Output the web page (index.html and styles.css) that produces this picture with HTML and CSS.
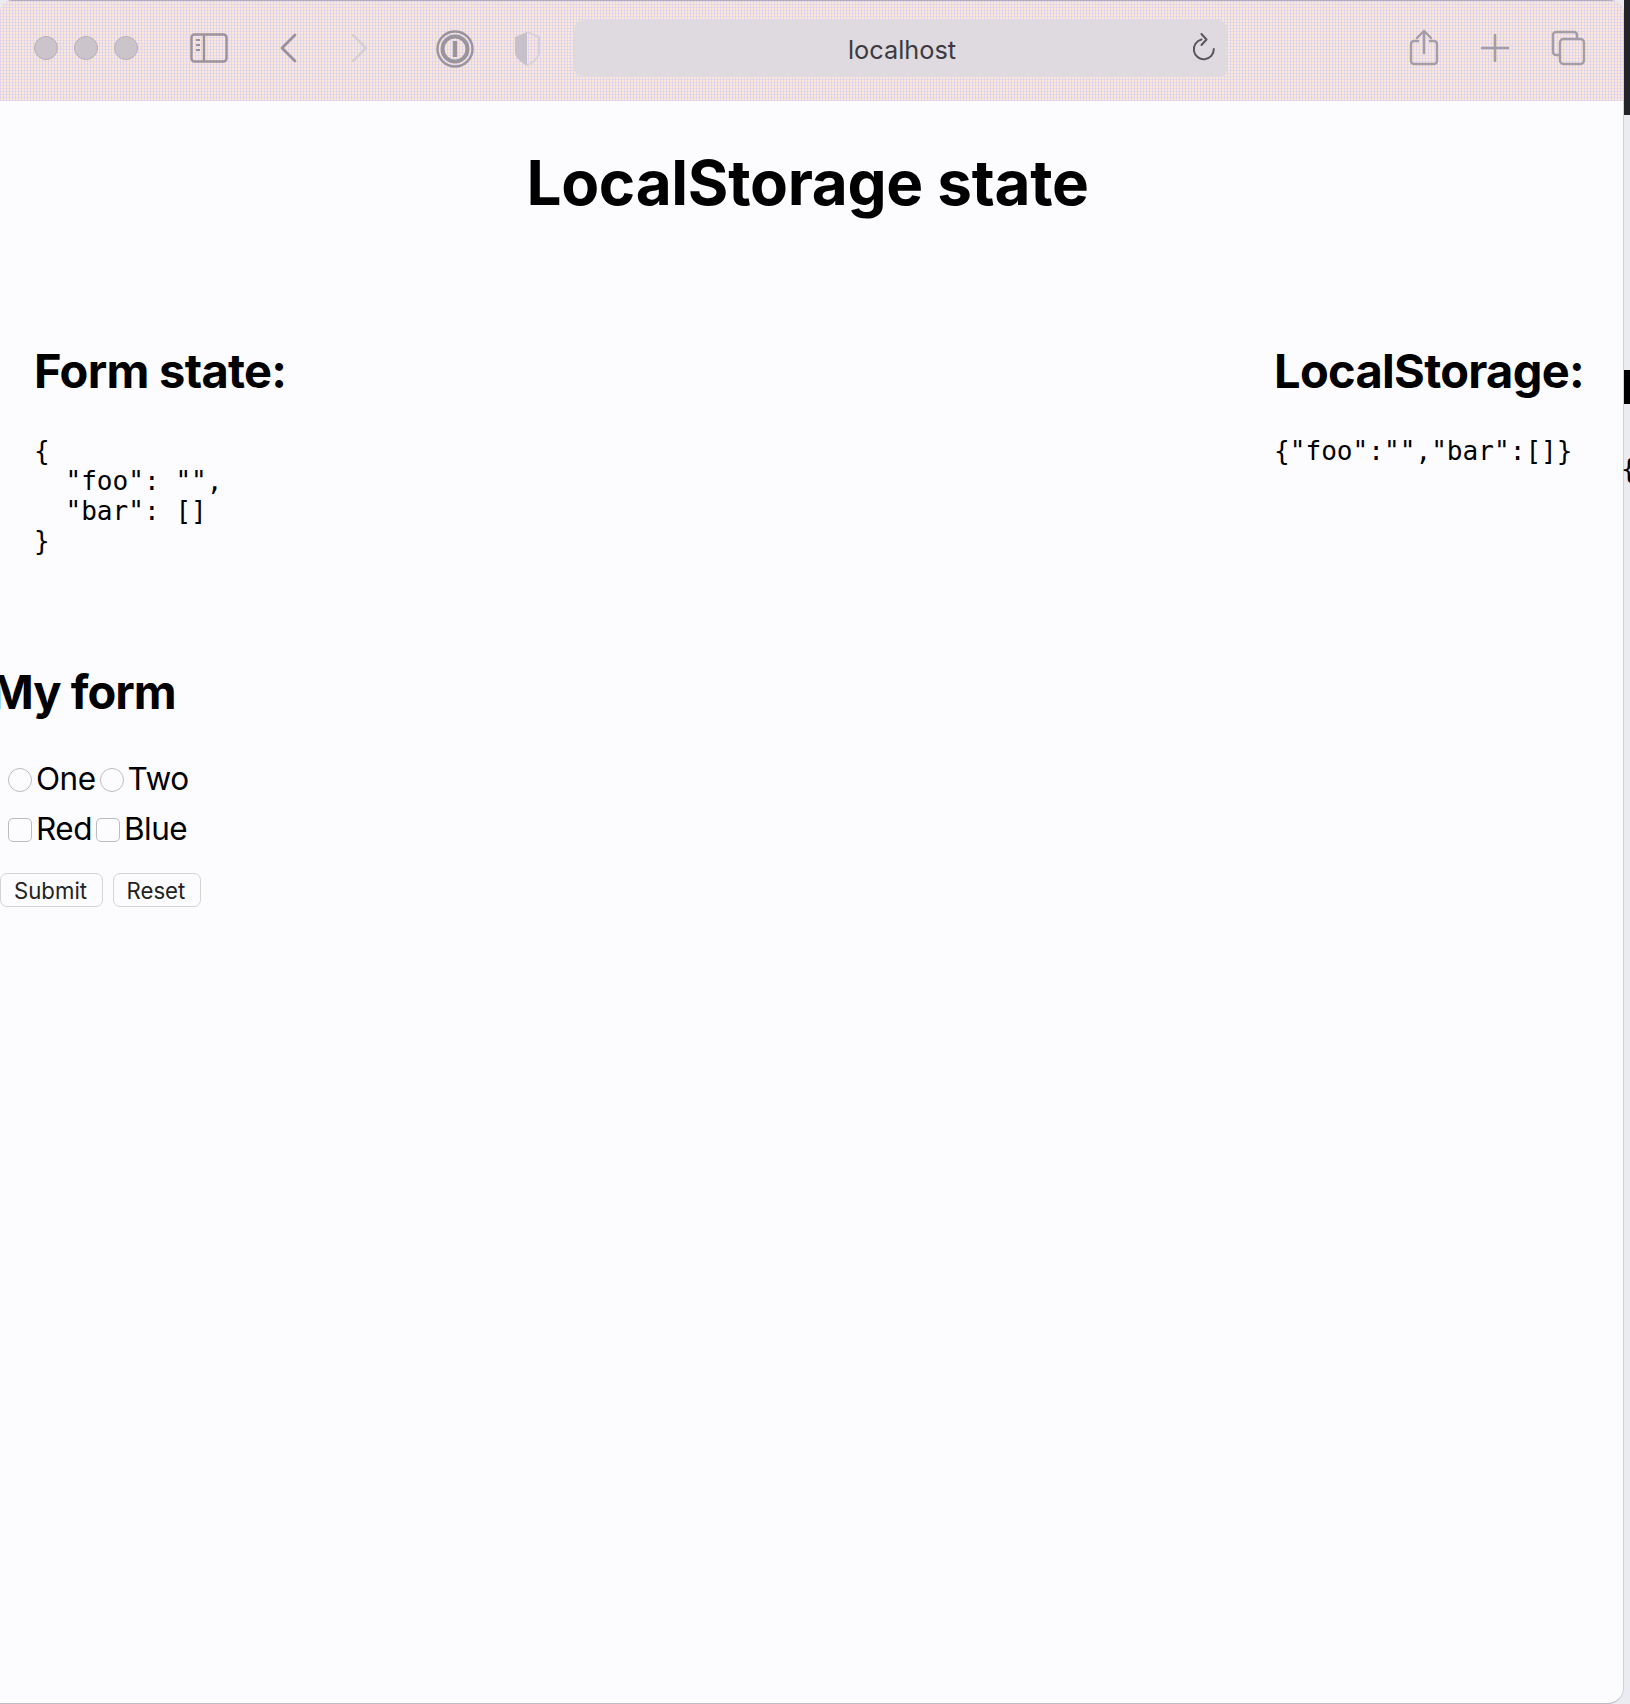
FILE: index.html
```html
<!DOCTYPE html>
<html lang="en">
<head>
<meta charset="utf-8">
<title>LocalStorage state</title>
<link rel="stylesheet" href="styles.css">
</head>
<body>
<div class="window">
  <header class="toolbar">
    <div class="lights"><span class="light"></span><span class="light"></span><span class="light"></span></div>
    <svg class="icon sidebar" width="38" height="30" viewBox="0 0 38 30" fill="none" stroke="#99929f" stroke-width="2.4"><rect x="1.500" y="1.500" width="35" height="27" rx="3"/><path d="M14 1.500v27"/><path d="M6 7h4M6 12h4M6 17h4" stroke-width="2"/></svg>
    <svg class="icon back" width="18" height="30" viewBox="0 0 18 30" fill="none" stroke="#97909e" stroke-width="2.800" stroke-linecap="round" stroke-linejoin="round"><path d="M15 2 2 15l13 13"/></svg>
    <svg class="icon forward" width="18" height="30" viewBox="0 0 18 30" fill="none" stroke="#d3cdd6" stroke-width="2.400" stroke-linecap="round" stroke-linejoin="round"><path d="M3 2l13 13L3 28"/></svg>
    <svg class="icon onepass" width="38" height="38" viewBox="0 0 38 38" fill="none" stroke="#9a949e"><circle cx="19" cy="19" r="17.500" stroke-width="2.400"/><circle cx="19" cy="19" r="12.500" stroke-width="4"/><path d="M19 11v16" stroke-width="4.500"/></svg>
    <svg class="icon shield" width="28" height="36" viewBox="0 0 28 36"><path d="M14 1 2 6v15c0 6 6 10 12 14z" fill="#c5c0c9"/><path d="M14 1l12 5v15c0 6-6 10-12 14" fill="none" stroke="#d8d3da" stroke-width="2"/></svg>
    <div class="address">
      <span class="url">localhost</span>
      <svg class="reload" width="24" height="30" viewBox="0 0 24 30" fill="none" stroke="#5a5661" stroke-width="2" stroke-linecap="round" stroke-linejoin="round"><path d="M9.500 6.500A10 10 0 1 0 21.800 16"/><path d="M9.500 1l5 5.500-5 5.500"/></svg>
    </div>
    <div class="actions">
      <svg class="icon" width="30" height="38" viewBox="0 0 30 38" fill="none" stroke="#a39da8" stroke-width="2.400" stroke-linecap="round" stroke-linejoin="round"><path d="M9 12H5a3 3 0 0 0-3 3v17a3 3 0 0 0 3 3h20a3 3 0 0 0 3-3V15a3 3 0 0 0-3-3h-4"/><path d="M15 24V2M8 9l7-7 7 7"/></svg>
      <svg class="icon" width="28" height="28" viewBox="0 0 28 28" stroke="#a39da8" stroke-width="2.600" stroke-linecap="round"><path d="M14 1v26M1 14h26"/></svg>
      <svg class="icon" width="35" height="36" viewBox="0 0 35 36" fill="none" stroke="#a39da8" stroke-width="2.400"><path d="M9 25H5a3 3 0 0 1-3-3V5a3 3 0 0 1 3-3h18a3 3 0 0 1 3 3v4"/><rect x="9" y="9" width="24" height="25" rx="3.500"/></svg>
    </div>
  </header>
  <main class="page">
    <h1 class="title">LocalStorage state</h1>
    <section class="panels">
      <div class="panel">
        <h2 class="heading">Form state:</h2>
<pre class="code">{
  "foo": "",
  "bar": []
}</pre>
      </div>
      <div class="panel">
        <h2 class="heading">LocalStorage:</h2>
        <pre class="code">{"foo":"","bar":[]}</pre>
      </div>
    </section>
    <form class="form">
      <h2 class="heading form-heading">My form</h2>
      <div class="choices">
        <label class="choice"><span class="radio"></span>One</label>
        <label class="choice"><span class="radio"></span>Two</label>
      </div>
      <div class="choices">
        <label class="choice"><span class="check"></span>Red</label>
        <label class="choice"><span class="check"></span>Blue</label>
      </div>
      <div class="buttons">
        <button class="button" type="button">Submit</button>
        <button class="button" type="button">Reset</button>
      </div>
    </form>
  </main>
</div>
<div class="peek">
  <span class="peek-dark"></span>
  <span class="peek-heading"></span>
  <span class="peek-code">{</span>
</div>
</body>
</html>
```
FILE: styles.css
```css
* { box-sizing: border-box; }
html, body { margin: 0; height: 100%; }
body {
  position: relative;
  width: 1630px;
  height: 1704px;
  overflow: hidden;
  background: #ebebf2;
  font-family: Inter, "Liberation Sans", sans-serif;
  color: #000;
}
.window {
  width: 1624px;
  height: 1704px;
  border-radius: 12px 14px 16px 0;
  border-right: 1px solid #cfcfd8;
  border-bottom: 1px solid #bdbdc8;
  overflow: hidden;
  background: #fcfcff;
  display: flex;
  flex-direction: column;
  position: relative;
  z-index: 1;
}
.toolbar {
  height: 101px;
  flex: none;
  display: flex;
  align-items: center;
  padding-left: 34px;
  border-top: 1px solid #b4acbc;
  background-color: #fdf2e4;
  background-image:
    repeating-linear-gradient(90deg, rgba(205, 200, 245, 0.55) 0 1px, transparent 1px 3px),
    repeating-linear-gradient(0deg, rgba(212, 205, 240, 0.6) 0 1px, rgba(252, 222, 205, 0.55) 1px 3px);
}
.lights { display: flex; gap: 16px; margin-right: 52px; margin-top: -6px; }
.light {
  width: 24px;
  height: 24px;
  border-radius: 50%;
  background: #cbc4cb;
  border: 1px solid #b5afb8;
}
.icon { flex: none; display: block; }
.sidebar { margin-right: 52px; margin-top: -7px; }
.back { margin-right: 52px; margin-top: -7px; }
.forward { margin-right: 68px; margin-top: -7px; }
.onepass { margin-right: 39px; margin-top: -5px; }
.shield { margin-right: 33px; margin-top: -5px; }
.address {
  position: relative;
  width: 654px;
  height: 57px;
  margin-top: -5px;
  border-radius: 10px;
  background: #dedadf;
  display: flex;
  align-items: center;
  justify-content: center;
}
.url { font-size: 25.300px; color: #3c3a40; position: relative; top: 1px; left: 1px; }
.reload { position: absolute; right: 12px; top: 13px; }
.actions {
  display: flex;
  align-items: center;
  gap: 42px;
  margin-left: 181px;
  margin-top: -7px;
}
.page { flex: 1; position: relative; }
.title {
  margin: 47px 0 0;
  padding-right: 8px;
  text-align: center;
  font-size: 62px;
  line-height: 70px;
  font-weight: 700;
  letter-spacing: -0.3px;
}
.panels {
  display: flex;
  justify-content: space-between;
  padding: 0 39px 0 34px;
  margin-top: 125px;
  height: 321px;
}
.heading {
  margin: 0;
  font-size: 47px;
  line-height: 56px;
  font-weight: 700;
  letter-spacing: -0.7px;
}
.code {
  margin: 37px 0 0;
  font-family: "DejaVu Sans Mono", "Liberation Mono", monospace;
  font-size: 26.100px;
  line-height: 30px;
}
.form-heading { margin-left: -10px; letter-spacing: -1px; }
.choices {
  display: flex;
  align-items: center;
  height: 50px;
  padding-left: 8px;
  gap: 4px;
  font-size: 31.500px;
}
.form-heading + .choices { margin-top: 33px; }
.choice { display: flex; align-items: center; gap: 4px; letter-spacing: -0.5px; }
.radio, .check {
  width: 24px;
  height: 24px;
  background: #fcfcff;
  border: 1px solid #bcbcbc;
  margin-top: 3px;
}
.radio { border-radius: 50%; }
.check { border-radius: 5px; }
.buttons { display: flex; gap: 10px; margin-top: 20px; }
.button {
  height: 34px;
  padding: 1px 14.500px 0 13px;
  background: #fcfcff;
  border: 1px solid #d4d4d4;
  border-radius: 7px;
  font: 400 22.200px Inter, "Liberation Sans", sans-serif;
  color: #222;
}
.peek { position: absolute; left: 1624px; top: 0; width: 6px; height: 100%; z-index: 2; }
.peek-dark { position: absolute; left: 0; top: 0; width: 6px; height: 115px; background: #23232a; }
.peek-heading { position: absolute; left: 0; top: 370px; width: 6px; height: 34px; background: #000; }
.peek-code {
  position: absolute;
  left: -3px;
  top: 454px;
  font: 25.900px "DejaVu Sans Mono", monospace;
  color: #000;
}
```
